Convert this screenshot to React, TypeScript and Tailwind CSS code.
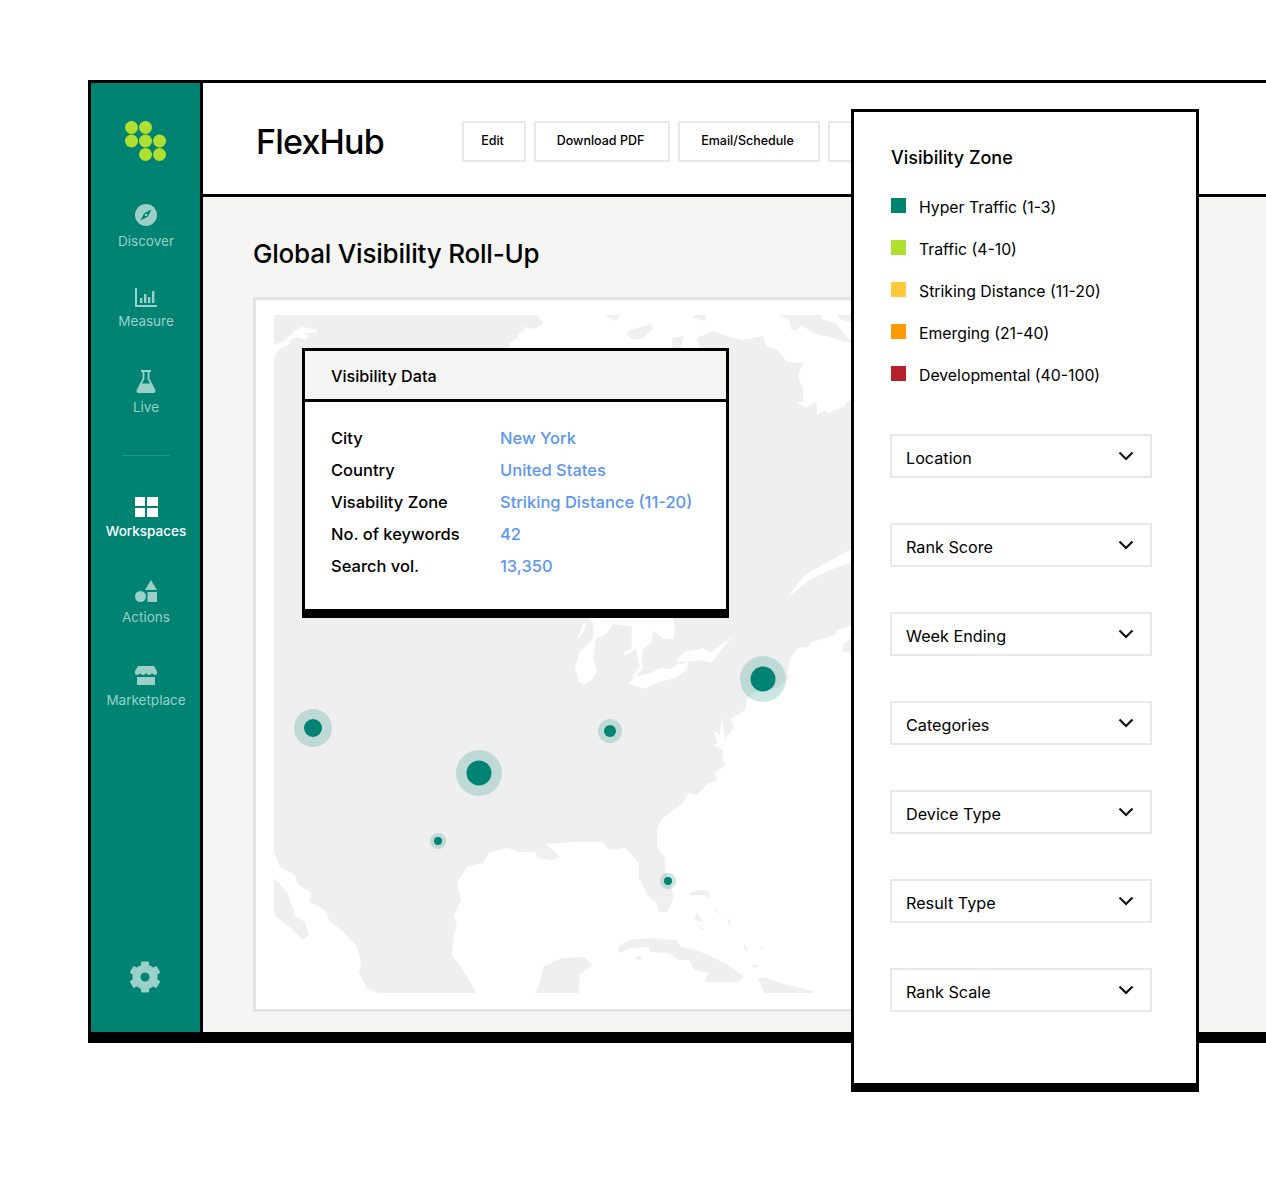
import type { ReactNode } from "react";

const FONT = "font-['Inter','Liberation_Sans',sans-serif]";

const LEGEND = [
  { label: "Hyper Traffic (1-3)", color: "bg-[#008373]" },
  { label: "Traffic (4-10)", color: "bg-[#b0e02f]" },
  { label: "Striking Distance (11-20)", color: "bg-[#ffc93c]" },
  { label: "Emerging (21-40)", color: "bg-[#ff9900]" },
  { label: "Developmental (40-100)", color: "bg-[#b5202a]" },
];

const FILTERS = [
  "Location",
  "Rank Score",
  "Week Ending",
  "Categories",
  "Device Type",
  "Result Type",
  "Rank Scale",
];

const ROWS = [
  ["City", "New York"],
  ["Country", "United States"],
  ["Visability Zone", "Striking Distance (11-20)"],
  ["No. of keywords", "42"],
  ["Search vol.", "13,350"],
];

const DOTS = [
  { x: 763, y: 679, ring: 23, dot: 12.5 },
  { x: 313, y: 728, ring: 19, dot: 9 },
  { x: 479, y: 773, ring: 23, dot: 12.5 },
  { x: 610, y: 731, ring: 12, dot: 6 },
  { x: 438, y: 841, ring: 8, dot: 4 },
  { x: 668, y: 881, ring: 8, dot: 4 },
];

function NavItem({
  icon,
  label,
  active,
  className,
}: {
  icon: ReactNode;
  label: string;
  active?: boolean;
  className?: string;
}) {
  return (
    <div className={`flex flex-col items-center ${className ?? ""}`}>
      <div className="flex h-[22px] items-center justify-center">{icon}</div>
      <span
        className={`mt-[7px] text-[13.5px] leading-[16px] ${active ? "font-medium text-white" : "text-[#9ad0c8]"}`}
      >
        {label}
      </span>
    </div>
  );
}

function Logo() {
  const dots = [
    [6.5, 6.5],
    [20.5, 6.5],
    [6.5, 20],
    [20.5, 20],
    [34.5, 20],
    [20.5, 33.5],
    [34.5, 33.5],
  ];
  return (
    <svg width="41" height="40" viewBox="0 0 41 40">
      {dots.map(([x, y]) => (
        <circle key={`${x}-${y}`} cx={x} cy={y} r="6.5" fill="#b0e02f" />
      ))}
    </svg>
  );
}

function Gear() {
  return (
    <svg width="32" height="32" viewBox="0 0 32 32" fill="#9ad0c8">
      <circle cx="16" cy="16" r="8.5" fill="none" stroke="#9ad0c8" strokeWidth="8" />
      {[0, 60, 120, 180, 240, 300].map((a) => (
        <rect key={a} x="12" y="0.5" width="8" height="6" rx="1" transform={`rotate(${a} 16 16)`} />
      ))}
    </svg>
  );
}

function Sidebar() {
  return (
    <aside className="flex w-[112px] shrink-0 flex-col items-center border-r-[3px] border-black bg-[#008373] pl-px">
      <div className="mt-[38px] h-[40px] -translate-x-px">
        <Logo />
      </div>
      <NavItem
        className="mt-[43px]"
        label="Discover"
        icon={
          <svg width="22" height="22" viewBox="0 0 22 22">
            <circle cx="11" cy="11" r="11" fill="#9ad0c8" />
            <path d="M16.5 5.5 12.8 12.800 5.5 16.5 9.200 9.200z" fill="#008373" />
            <circle cx="11" cy="11" r="1.3" fill="#9ad0c8" />
          </svg>
        }
      />
      <NavItem
        className="mt-[35px]"
        label="Measure"
        icon={
          <svg width="22" height="20" viewBox="0 0 22 20" fill="#9ad0c8" className="translate-y-[3px]">
            <path d="M0 0h2v17h20v2H0z" />
            <rect x="5" y="10" width="2.4" height="5" />
            <rect x="9" y="6" width="2.4" height="9" />
            <rect x="13" y="9" width="2.4" height="6" />
            <rect x="17" y="3" width="2.4" height="12" />
          </svg>
        }
      />
      <NavItem
        className="mt-[41px]"
        label="Live"
        icon={
          <svg width="20" height="23" viewBox="0 0 20 23" fill="#9ad0c8">
            <path d="M5 0h10v2h-1.600v6.500L19.400 20c.6 1.500-.3 3-2 3H2.600c-1.700 0-2.600-1.500-2-3L6.600 8.500V2H5z" />
            <path d="M8.400 2v7L6 13.500h8L11.600 9V2z" fill="#008373" />
          </svg>
        }
      />
      <div className="mt-[40px] h-px w-[48px] bg-[#2a9385]" />
      <NavItem
        className="mt-[38px]"
        active
        label="Workspaces"
        icon={
          <div className="mt-[3px] grid grid-cols-2 gap-[2px]">
            <div className="h-[9px] w-[10.5px] bg-white" />
            <div className="h-[9px] w-[10.5px] bg-white" />
            <div className="h-[9px] w-[10.5px] bg-white" />
            <div className="h-[9px] w-[10.5px] bg-white" />
          </div>
        }
      />
      <NavItem
        className="mt-[41px]"
        label="Actions"
        icon={
          <svg width="22" height="22" viewBox="0 0 22 22" fill="#9ad0c8">
            <path d="M16 0 22 10H10z" />
            <circle cx="5.500" cy="16.500" r="5.500" />
            <rect x="12.500" y="12" width="9.500" height="10" />
          </svg>
        }
      />
      <NavItem
        className="mt-[38px]"
        label="Marketplace"
        icon={
          <svg width="22" height="19" viewBox="0 0 22 19" fill="#9ad0c8" className="translate-y-px">
            <path d="M3 0h16l3 5v2c0 1-1 2-2 2-1.200 0-2.200-.7-3-2-.7 1.300-1.800 2-3 2s-2.300-.7-3-2c-.7 1.300-1.800 2-3 2s-2.300-.7-3-2c-.8 1.300-1.800 2-3 2-1 0-2-1-2-2V5z" />
            <path d="M2 11h18v8H2z" />
          </svg>
        }
      />
      <div className="mt-auto mb-[39px] -translate-x-px">
        <Gear />
      </div>
    </aside>
  );
}

function Header() {
  const buttons = [
    { label: "Edit", w: "w-[64px]" },
    { label: "Download PDF", w: "w-[136px]" },
    { label: "Email/Schedule", w: "w-[142px]" },
    { label: "Subscribe", w: "w-[120px]" },
  ];
  return (
    <header className="flex h-[114px] shrink-0 items-center border-b-[3px] border-black bg-white pt-[6px] pl-[53px]">
      <h1 className="w-[206px] text-[34px] leading-none font-medium tracking-[-0.8px] text-black">FlexHub</h1>
      <div className="flex gap-[8px]">
        {buttons.map((b) => (
          <button
            key={b.label}
            className={`flex h-[41px] items-center justify-center border-2 border-[#e8e8e8] pr-[3px] text-[12.5px] font-medium text-black ${b.w}`}
          >
            {b.label}
          </button>
        ))}
      </div>
    </header>
  );
}

function WorldMap() {
  return (
    <svg width="578" height="678" viewBox="274 315 578 678" className="block">
      <rect x="274" y="315" width="578" height="678" fill="#efefef" />
      <g fill="#fff">
        {/* arctic water and the bay, the middle part is hidden by the data card */}
        <polygon points="536,315 542,321 543,324 534,329 524,327 524,331 517,334 518,338 509,343 510,348 510,600 700,600 700,348 697,338 713,331 726,336 742,340 763,336 767,346 778,350 787,362 803,363 798,375 803,390 803,402 797,402 805,408 817,402 817,415 825,410 828,413 843,407 852,398 852,343 843,341 832,338 813,333 801,325 797,330 791,330 790,321 778,315" />
        <polygon points="822,315 823,320 836,323 843,333 852,342 852,322 843,321 836,315" />
        <polygon points="274,345 284,341 295,331 301,327 318,330 318,332 303,333 309,336 305,340 297,337 290,340 288,345 280,348 274,357" />
        {/* pacific */}
        <polygon points="274,852 280,867 295,875 297,883 311,893 309,902 325,910 329,920 347,935 357,947 361,963 359,973 367,988 378,993 274,993" />
        {/* atlantic and gulf */}
        <polygon points="852,625 837,630 835,635 812,642 808,647 798,648 790,660 787,673 790,678 777,688 753,693 747,698 745,710 733,718 730,718 734,727 728,735 725,740 722,717 720,735 713,730 718,743 713,745 723,750 722,758 726,765 714,773 718,780 708,783 697,795 689,793 681,805 663,818 657,828 657,847 665,858 665,870 673,893 673,900 667,912 659,912 657,903 649,897 639,878 639,863 625,848 610,850 602,842 574,842 562,843 546,844 560,857 552,860 538,858 535,852 519,852 507,848 489,853 483,863 467,867 457,883 461,900 454,915 457,927 454,933 452,955 463,970 475,990 476,993 852,993" />
        <polygon points="787,598 803,577 813,570 837,557 852,549 852,563 840,566 820,575 807,582" />
        {/* great lakes, traced from a 3x crop */}
        <g transform="translate(560 610) scale(0.3333)">
          <polygon points="70,0 335,0 345,65 338,88 310,85 280,62 275,95 248,118 245,150 248,175 225,200 215,200 240,170 228,118 195,138 190,130 215,115 215,50 160,42 138,72 108,85 100,140 110,185 95,210 75,222 55,215 45,170 60,125 100,85 100,40" />
          <polygon points="70,40 48,95 68,70 80,40" />
          <polygon points="205,220 225,200 270,190 300,175 330,178 350,165 385,155 380,180 345,205 300,215 250,236" />
          <polygon points="345,155 375,125 430,115 450,127 470,115 520,78 490,110 470,140 450,160 430,150 385,155" />
        </g>
      </g>
      <g fill="#efefef">
        <polygon points="605,315 615,321 620,315" />
        <polygon points="628,331 651,324 653,329 643,338 634,340 627,335" />
        <polygon points="672,338 684,336 680,348 672,348" />
        <polygon points="693,318 705,321 706,315 695,315" />
        <polygon points="843,652 852,653 852,637 843,645" />
        {/* baja */}
        <polygon points="274,878 288,893 290,902 295,910 293,915 305,922 309,935 303,940 291,928 276,917 274,910" />
        {/* yucatan, hispaniola */}
        <polygon points="535,993 540,983 543,967 562,958 584,957 592,965 580,975 579,993" />
        <polygon points="764,993 758,978 764,977 780,983 813,991 813,993" />
        <g transform="translate(250 600) scale(0.3953 0.3333)">
          <polygon points="930,1040 960,1020 1010,1015 1080,1020 1090,1040 1130,1050 1175,1075 1210,1095 1250,1130 1235,1145 1150,1145 1160,1120 1125,1110 1110,1080 1085,1080 1060,1060 1010,1055 1010,1040 960,1045 935,1060" />
          <polygon points="975,1070 990,1065 990,1080 975,1078" />
          <polygon points="1110,880 1135,870 1160,872 1165,900 1150,885 1115,885" />
          <polygon points="1130,935 1145,965 1125,960" />
          <polygon points="1175,925 1195,945 1180,935" />
          <polygon points="1208,958 1216,960 1214,982" />
          <polygon points="1140,980 1150,990 1140,990" />
          <polygon points="1250,1030 1260,1050 1252,1055" />
          <polygon points="1290,1043 1300,1045 1292,1050" />
          <polygon points="1268,1095 1285,1095 1280,1105" />
        </g>
      </g>
      {DOTS.map((d) => (
        <g key={d.x}>
          <circle cx={d.x} cy={d.y} r={d.ring} fill="#008373" fillOpacity="0.2" />
          <circle cx={d.x} cy={d.y} r={d.dot} fill="#008373" />
        </g>
      ))}
    </svg>
  );
}

function DataCard() {
  return (
    <div className="absolute top-[48px] left-[46px] h-[270px] w-[427px] border-[3px] border-b-[9px] border-black bg-white">
      <div className="flex h-[51px] items-center border-b-[3px] border-black bg-[#f5f5f3] pt-[2px] pl-[26px] text-[16.2px] font-medium text-black">
        Visibility Data
      </div>
      <dl className="grid grid-cols-[169px_1fr] pt-[20px] pl-[26px] text-[16.5px] leading-[32px]">
        {ROWS.map(([k, v]) => (
          <div key={k} className="contents">
            <dt className="font-medium text-black">{k}</dt>
            <dd className="font-medium text-[#5b96f0]">{v}</dd>
          </div>
        ))}
      </dl>
    </div>
  );
}

function FilterPanel() {
  return (
    <div className="absolute top-[109px] left-[851px] h-[983px] w-[348px] border-[3px] border-b-[9px] border-black bg-white pt-[34px] pl-[37px]">
      <h2 className="text-[18px] leading-[24px] font-medium text-black">Visibility Zone</h2>
      <ul className="mt-[25px] flex flex-col gap-[18px]">
        {LEGEND.map((l) => (
          <li key={l.label} className="flex h-[24px] items-center text-[15.8px] text-black">
            <span className={`mr-[13px] -mt-[3px] h-[15px] w-[15px] ${l.color}`} />
            <span className="mt-[2px]">{l.label}</span>
          </li>
        ))}
      </ul>
      <div className="mt-[47px] -ml-px flex flex-col gap-[45px]">
        {FILTERS.map((f) => (
          <div
            key={f}
            className="flex h-[44px] w-[262px] items-center justify-between border-2 border-[#e8e8e8] pr-[16px] pl-[14px] text-[16.2px] text-black"
          >
            <span className="mt-[4px]">{f}</span>
            <svg width="16" height="10" viewBox="0 0 16 10" className="-mt-px" fill="none" stroke="#111" strokeWidth="2.2">
              <path d="M1.500 1.500 8 8l6.500-6.500" />
            </svg>
          </div>
        ))}
      </div>
    </div>
  );
}

export default function App() {
  return (
    <div className={`relative h-[1178px] w-[1266px] overflow-hidden bg-white pt-[80px] pl-[88px] ${FONT}`}>
      <div className="flex h-[963px] w-[1300px] border-t-[3px] border-b-[11px] border-l-[3px] border-black">
        <Sidebar />
        <main className="flex min-w-0 flex-1 flex-col bg-[#f5f5f3]">
          <Header />
          <div className="pt-[40px] pl-[50px]">
            <h2 className="text-[26px] leading-[34px] font-medium tracking-[-0.2px] text-black">Global Visibility Roll-Up</h2>
            <div className="relative mt-[26px] h-[715px] w-[800px] border-[3px] border-[#e3e3e1] bg-white pt-[15px] pl-[18px]">
              <WorldMap />
              <DataCard />
            </div>
          </div>
        </main>
      </div>
      <FilterPanel />
    </div>
  );
}
